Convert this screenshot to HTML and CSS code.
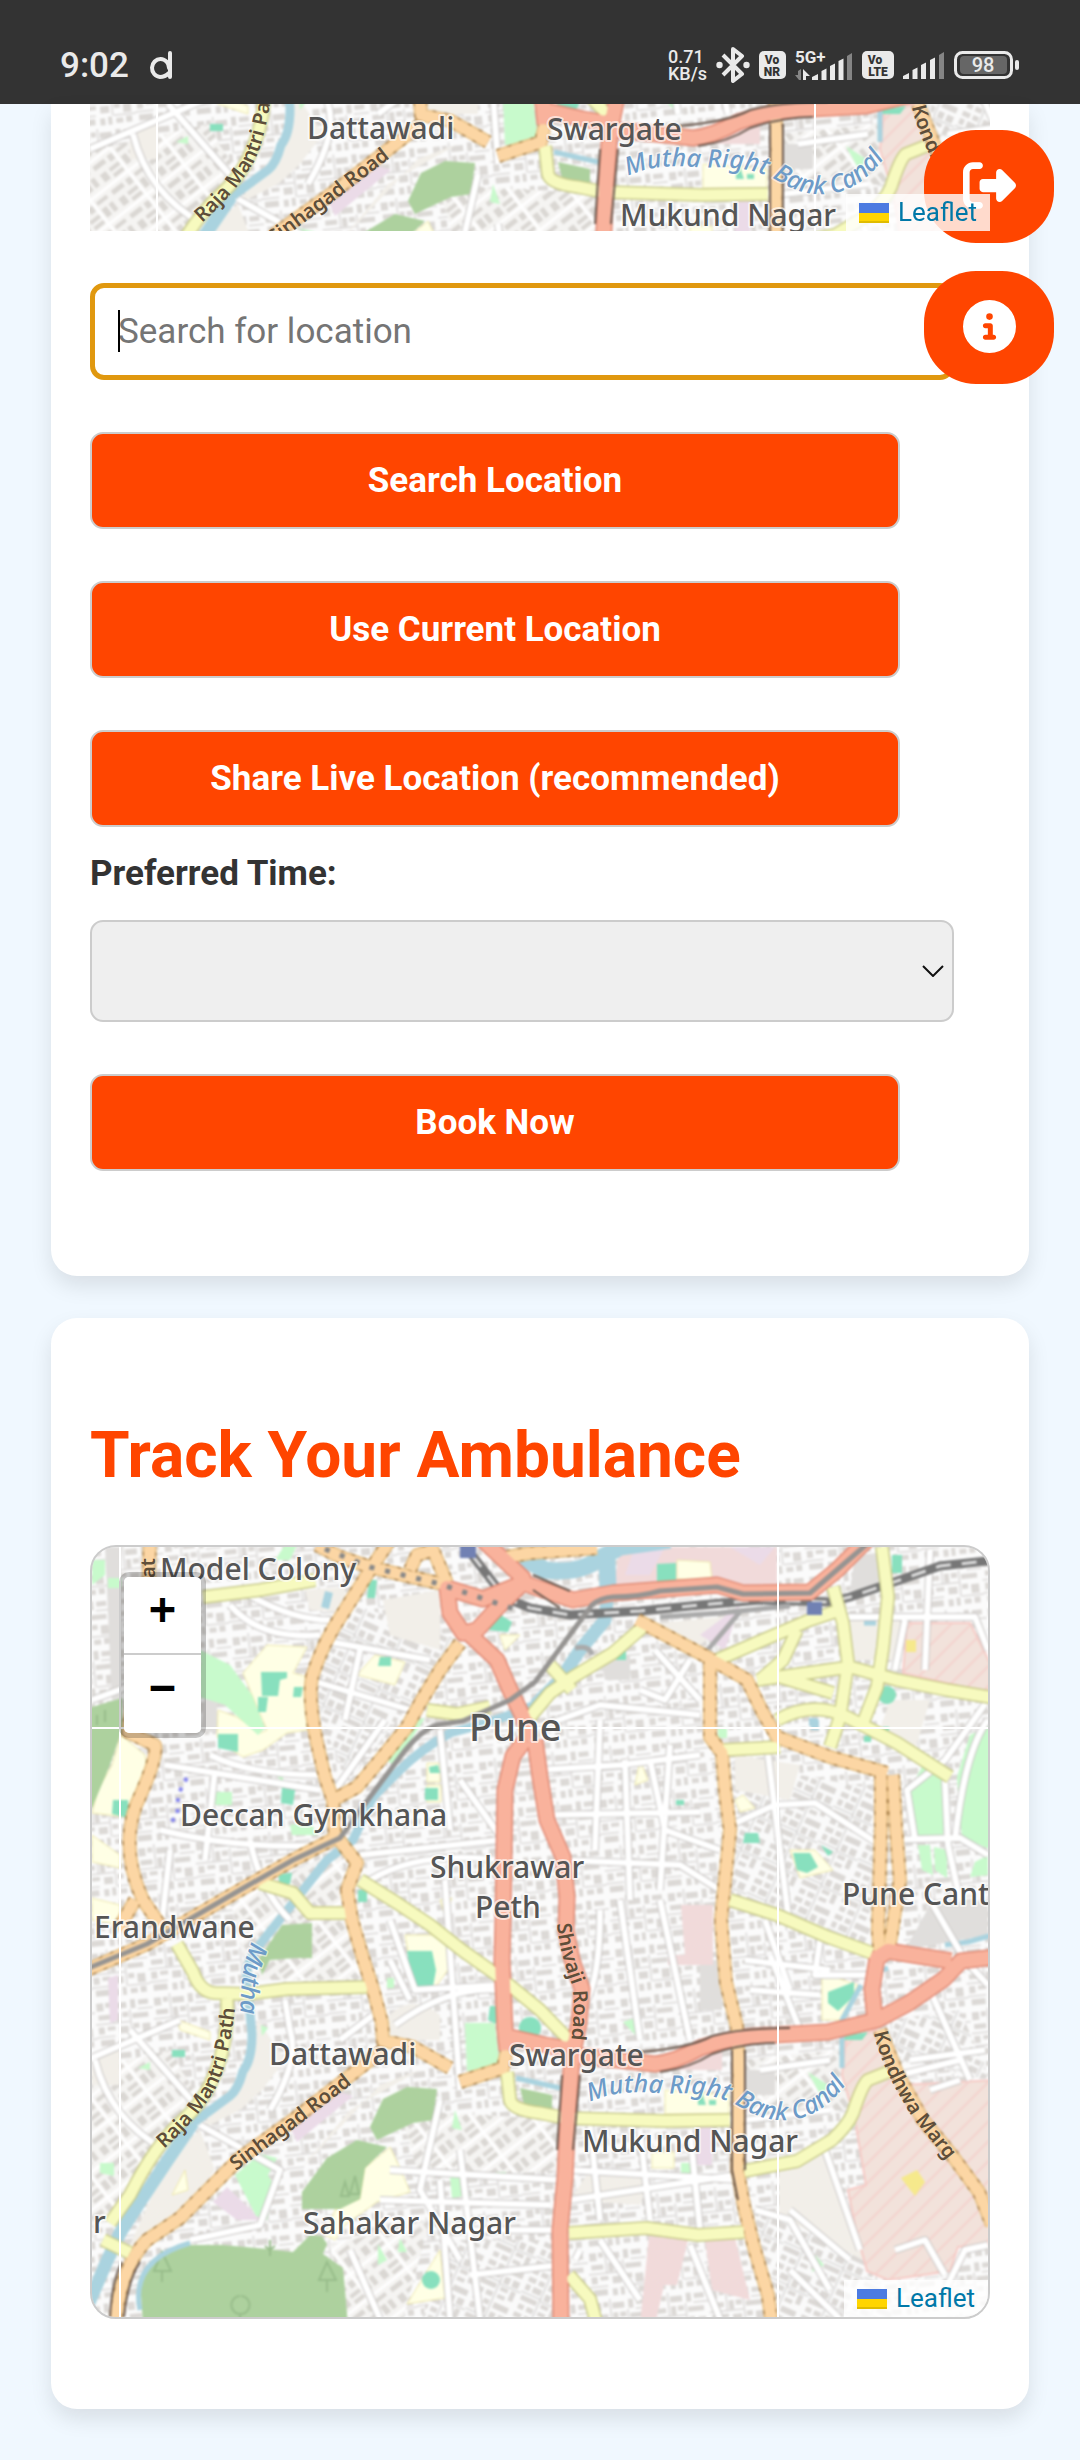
FILE: index.html
```html
<!DOCTYPE html>
<html lang="en">
<head>
<meta charset="utf-8">
<meta name="viewport" content="width=device-width, initial-scale=1">
<title>Ambulance Booking</title>
<link rel="stylesheet" href="styles.css">
</head>
<body>
<svg class="map-defs" aria-hidden="true">
  <defs>
    <pattern id="blocks-a" width="58" height="50" patternUnits="userSpaceOnUse" patternTransform="rotate(-6)">
      <rect width="58" height="50" fill="#fbfbfb"/>
      <path fill="#dcd9d6" d="M2 3h7v8H2zM11 3h5v5h-5zM20 4h12v6H20zM36 2h5v9h-5zM44 3h10v5H44zM3 15h12v5H3zM20 14h5v9h-5zM27 14h6v5h-6zM37 16h16v5H37zM2 27h6v7H2zM11 27h8v4h-8zM23 28h9v7h-9zM37 26h6v5h-6zM46 27h8v9h-8zM3 40h14v6H3zM22 40h5v7h-5zM30 39h4v8h-4zM38 41h7v5h-7zM48 40h6v6h-6z"/>
      <path fill="none" stroke="#cbc8c6" stroke-width="1" d="M18 0v24M35 12v26M0 24h34M36 38h22M0 37h18M43 12h15"/>
    </pattern>
    <pattern id="blocks-b" width="44" height="38" patternUnits="userSpaceOnUse" patternTransform="rotate(24)">
      <rect width="44" height="38" fill="#fafafa"/>
      <path fill="#dbd8d5" d="M2 2h8v5H2zM13 2h6v5h-6zM24 2h16v6H24zM2 10h5v6H2zM10 10h9v6h-9zM24 12h6v7h-6zM33 12h7v7h-7zM2 22h17v5H2zM24 23h8v4h-8zM35 23h5v10h-5zM3 31h6v5H3zM12 31h7v5h-7zM24 31h8v4h-8z"/>
      <path fill="none" stroke="#cbc8c6" stroke-width="1" d="M21 0v38M0 19h22M22 21h22"/>
    </pattern>
    <pattern id="blocks-c" width="48" height="30" patternUnits="userSpaceOnUse" patternTransform="rotate(-38)">
      <rect width="48" height="30" fill="#f5f4f2"/>
      <path fill="#dad7d3" d="M2 3h14v5H2zM20 3h6v7h-6zM31 3h13v4H31zM3 14h7v9H3zM14 14h12v4H14zM31 12h6v10h-6zM40 12h5v10h-5zM14 21h12v4H14z"/>
      <path fill="none" stroke="#fff" stroke-width="3" d="M0 28h48M28 0v30"/>
    </pattern>
    <pattern id="hatch" width="14" height="14" patternUnits="userSpaceOnUse" patternTransform="rotate(45)">
      <rect width="14" height="14" fill="#f2e2db"/>
      <path stroke="#f3d2cd" stroke-width="2" d="M1 0v14"/>
    </pattern>
    <g id="streets">
      <path d="M52 2075L180 2020M92 1700L200 1660M95 2060Q110 2120 165 2150M130 2030L200 2110M210 1755Q250 1775 320 1775M165 1765L320 1790M160 1830Q240 1850 330 1845M170 1850L160 1940M215 1770L205 1860M250 1840Q260 1890 290 1920M230 1605Q260 1640 320 1635M240 1590Q290 1620 330 1620M320 1640L430 1660M310 1680L410 1710M360 1650L345 1720M385 1720L335 1790M440 1730L450 1830M460 1780L510 1850M360 1855L500 1840M370 1880Q420 1850 500 1860M390 1920L415 1990L500 1985M395 2025Q450 1985 500 1990M445 1880L460 2090M390 1960L410 2000M285 2000L290 2030Q300 2060 270 2110M340 2040L380 2010M200 2125L280 2170L260 2225L190 2240M440 2100L420 2190L460 2260M390 2170L560 2180M440 2180L450 2319M350 2250L380 2319M460 2150L480 2319M455 2230H560M470 2275L560 2265M380 2200L550 2205"/>
      <path d="M545 1725L600 1705L700 1715M540 1770L620 1765L700 1755M600 1720L595 1850M545 1815L700 1812M625 1760L630 1900M650 1760L665 1830L720 1850M670 1745L660 1890M560 1860L680 1865L720 1890M690 1660L665 1700L640 1690M655 1650L700 1700M720 1830L775 1805L815 1803L880 1845M765 1730L790 1930M765 1920L790 1990M620 1900L640 2040M600 1910Q600 1990 580 2010M660 1900L690 2040M745 1960L830 1970M750 1990L820 1995M770 1955L800 2030M820 1940L815 1975L870 1975M570 2200L735 2175M590 2125L600 2220M640 2130L650 2220M690 2130L700 2230M570 2170L740 2180M690 2245L720 2319M580 2250L575 2260M600 2240L640 2300M760 2070L830 2060M745 2120L830 2110M825 2150L860 2250M790 2210L850 2260M790 2270L840 2319M755 2210L790 2220L830 2290"/>
      <path d="M845 1617H975L988 1650M905 1620L895 1670M930 1550L925 1670M880 1840L960 1838L988 1855M945 1780L948 1845L960 1900M988 1700L945 1760L907 1790L915 1840M988 1720Q965 1750 955 1840M930 1900L965 1960L988 1985M890 2005L930 1990L970 2080M910 2060L985 2050M900 2075L960 2060M930 2090L960 2080M895 2250L925 2240L945 2275M945 2290L965 2250L988 2245"/>
    </g>
    <g id="yellow-roads">
      <path d="M203 1597L260 1590L315 1580M427 1710L457 1714L490 1707M530 1717L550 1693L573 1677L613 1653L643 1627M717 1660L763 1640L810 1620L840 1610M833 1587L843 1623L848 1663L840 1717L830 1747M882 1547L888 1597L883 1647L877 1687L863 1723M757 1680L807 1673L850 1667L897 1680L947 1690L995 1698M777 1720Q813 1700 847 1717L897 1743L950 1777M760 1680L783 1660L797 1630M780 1677L833 1693M723 1750L780 1747M730 1900L777 1915L828 1937L872 1953M550 1665L572 1690"/>
      <path d="M260 1883L293 1893L310 1913L347 1913M360 1880L397 1903L430 1925L463 1951L497 1975L540 2010L569 2040M177 1944L193 1972Q200 1992 215 1993L247 1994L287 1989L367 1987M227 1999Q229 2047 210 2085Q200 2105 183 2120Q155 2145 130 2195L110 2223M103 2240L130 2253M507 2072L510 2100Q512 2110 540 2113L565 2118L665 2121L730 2120M744 2171L797 2161L832 2140Q848 2125 853 2113Q862 2085 868 2080L888 2072M569 2233L646 2228L698 2235L744 2232M569 2275L590 2299L597 2325"/>
    </g>
    <g id="orange-roads">
      <path d="M150 1540L148 1600L128 1732L155 1745Q158 1758 136 1805Q120 1850 143 1900L160 1925M135 1900L118 1930M390 1540L370 1570L343 1613Q323 1642 312 1677Q308 1700 317 1743L325 1777L333 1800L335 1837M460 1643L440 1670L420 1703L407 1727L380 1760L357 1787L333 1800M337 1837L293 1860L240 1890L147 1944L52 1985M337 1837L357 1863L347 1890L352 1920L363 1958L373 1989L382 2023L383 2041L413 2047L450 2068M317 1545L340 1557L370 1567L403 1575L447 1585M410 1570L417 1555L433 1550L447 1583M507 1557L530 1553L597 1548M460 2082L503 2068L507 2050"/>
      <path d="M637 1620L707 1657L747 1680L763 1713L777 1737L830 1757L887 1773M710 1660L710 1737L722 1753L725 1790L730 1830L721 1920L726 1982L737 2027L739 2075L737 2168L744 2206L754 2247L768 2295L772 2325M881 1775L881 1830L878 1930L880 1955M893 1775L896 1830L900 1880L889 1950M880 2030L898 2075L923 2120L951 2154L979 2192L992 2225M383 2050L347 2078L293 2120L240 2158L213 2185L180 2218L147 2240Q120 2268 115 2325"/>
    </g>
    <g id="red-roads">
      <path d="M483 1540L523 1578L523 1583L483 1599L447 1588L450 1613L463 1633L477 1630L500 1605L523 1583L573 1600L613 1593L653 1590L717 1585L743 1593L810 1592L837 1570L867 1540M468 1633L497 1660L510 1690L523 1717L530 1740M525 1740L513 1756L505 1790L503 1920L502 1960L505 2030L507 2050M535 1740L540 1777L547 1820L563 1857L567 1897L566 1930L572 1960L582 1989L579 2023L572 2058L568 2110L565 2178L560 2230L561 2325M510 2037L545 2045L572 2050M572 2055L655 2064Q675 2062 700 2048Q735 2035 775 2035L828 2032L877 2020L909 2003L944 1979L961 1961L995 1957M875 2020L872 1989L877 1958L888 1951L951 1961"/>
    </g>
    <g id="terrain">
      <rect x="40" y="1530" width="970" height="810" fill="url(#blocks-a)"/>
      <path fill="url(#blocks-b)" d="M340 1600L460 1640L350 1780L310 1700ZM720 1760L880 1790L875 1950L725 1900ZM740 2200L860 2240L900 2330H770ZM960 2010L990 2080L900 2060L890 2020ZM440 2240H560V2330H420Z"/>
      <path fill="url(#blocks-c)" d="M40 2080L170 2050L200 2100L110 2220L40 2240ZM230 1900L340 1850L360 1980L250 1980ZM740 2060L840 2050L850 2110L740 2115ZM400 2110L560 2120V2170L420 2180ZM330 2245L430 2220L400 2330H350Z"/>
      <!-- open ground -->
      <path fill="#f2efe9" d="M779 2165L830 2150L866 2262L779 2215ZM590 2170L650 2175L640 2205L570 2200ZM735 1755L800 1765L790 1800L735 1790ZM640 1625L740 1615L700 1645ZM383 1600L440 1590L440 1650L390 1635ZM305 1590L345 1587V1612L310 1610ZM840 1620H900V1660H850ZM890 1700L930 1700L915 1750L880 1730ZM92 2055L120 2050V2085H92ZM258 2020L285 2060L262 2090L240 2110L200 2130L250 2060ZM385 2020Q410 1990 440 2015V2040H390ZM350 2110L420 2070L380 2085L300 2170ZM170 2155L200 2130L215 2170L160 2240L130 2245Z"/>
      <path fill="#e0dedc" d="M855 1555H880V1590H850ZM930 1905L988 1900V1935L905 1950ZM700 1960H722V2010H700ZM742 2070H775V2095H745ZM205 1697H217V1732H200ZM600 1655H630V1680H605ZM105 1547H121V1700H112Z"/>
      <path fill="#f1dada" d="M613 1590L620 1547H777V1590ZM681 1905H713V1965L668 1965V1955H685ZM649 2236L688 2240L677 2285L664 2285L655 2325H640ZM705 2240L735 2238L750 2300L712 2290ZM680 2045H722V2070H675Z"/>
      <path fill="#ebdbe8" d="M635 1547H665L650 1575H625ZM730 1547H775L760 1565ZM290 2127L340 2092L353 2096L297 2142ZM213 2202L227 2187L262 2220H237ZM108 1978L118 1975V2020L110 2023ZM700 1635L740 1605L725 1650ZM697 2125H712V2165H697Z"/>
      <path fill="url(#hatch)" stroke="#f6cbc6" stroke-width="2" d="M842 2075L846 2040L876 2030L902 2085L995 2080V2244L958 2247L950 2271L888 2280L867 2271L856 2230L848 2190L866 2185L855 2120ZM907 1623H970L990 1663V1693L903 1673Z"/>
      <!-- schools and campuses -->
      <path fill="#ffffe5" stroke="#efe9b0" stroke-width="1" d="M121 1735L145 1755L148 1775L125 1817L92 1813L98 1790L112 1765ZM243 1673L267 1645L307 1647L293 1673L308 1677L307 1730L287 1733L263 1750L243 1757L227 1747L217 1737L218 1710L237 1717L260 1733L267 1730L253 1697ZM357 1675L375 1655L405 1662L395 1685ZM677 1560L710 1562L712 1580L677 1579ZM365 2168L390 2147L400 2168L410 2192L377 2202L345 2225L335 2240L325 2235L335 2210L360 2199ZM407 2304L440 2250L445 2298ZM405 1935H450V1967L432 1992L413 1980ZM665 2090L729 2095V2114H665ZM822 1973L858 1985L840 2020L822 2020ZM652 2152H674V2168H652ZM735 1800L743 1795L755 1808L740 1812ZM790 1850L815 1850L833 1870L800 1878ZM178 2020L210 2032V2040L180 2030ZM185 2170L188 2190L172 2195ZM500 1635H520L505 1650ZM427 1763H440V1782H427ZM427 1785H441V1802H427ZM92 1898L120 1905V1925L92 1920ZM980 1765L988 1770V1795L975 1785ZM92 1835L120 1855V1868L92 1862ZM810 1610H825V1618H810ZM440 1900L452 1898L445 1915ZM640 1760L648 1780L635 1785Z"/>
      <path fill="#f6e98c" d="M901 2178L917 2170L925 2182L915 2196ZM906 1640H916V1652H906Z"/>
      <!-- parks -->
      <path fill="#c8facc" d="M200 1650L230 1665L252 1695L265 1728L258 1735L225 1705L200 1697ZM275 1560L285 1545H297L290 1560ZM108 1578H121V1588H108ZM215 1792H232V1805H215ZM290 1825L310 1822L318 1835H292ZM235 2175L260 2154L277 2158L268 2175L275 2187L267 2220L256 2216ZM465 2023L495 2023L500 2068L467 2071ZM910 1790L927 1757L947 1777L943 1837L917 1837ZM992 1725L970 1735L957 1777L962 1838L992 1850ZM918 1845H930L933 1875L922 1870ZM934 1847L947 1850L947 1878L935 1870ZM975 1862L988 1855V1875L970 1877ZM623 2022L635 2018L640 2040ZM808 2072L828 2085L822 2098ZM815 2255L824 2265L812 2272ZM450 2176L460 2178L470 2195L452 2198ZM681 2163H692V2180H681ZM415 1720L425 1718L395 1765L388 1762ZM378 2244L387 2260L378 2265ZM455 2110L462 2130L452 2128ZM100 2163H114V2176L100 2173ZM138 2068L150 2062V2070ZM400 2238L407 2252H398ZM440 2190L450 2195ZM92 1560H105V1575L92 1585ZM270 1770L283 1773V1782ZM850 2115L856 2125L848 2130ZM261 2025L268 2028L262 2036ZM387 1978H394V1988H387ZM495 2172H506V2180H495ZM718 1728H727V1738H718Z"/>
      <path fill="#add19e" d="M40 1720L92 1707L122 1698V1730L110 1765L92 1808H40ZM370 2127L383 2099L407 2087L437 2089L433 2120L413 2123L377 2140ZM302 2192L327 2158L357 2140L387 2147L365 2168L360 2199L340 2209L302 2209ZM143 2325L140 2280L157 2257L190 2245L223 2245L267 2249L293 2252L310 2235L322 2236L327 2244L323 2254L343 2268L348 2325ZM520 2088L552 2095V2112L524 2104ZM282 1925L312 1923V1958L295 1958L270 1960L262 1975L258 1960Z"/>
      <path fill="#88e0be" d="M261 1672H287V1678L280 1680L278 1696H262ZM258 1697H268L266 1712H258ZM294 1687H303L301 1697H293ZM218 1734H238V1752L218 1748ZM369 1580H377L375 1598H367ZM484 1620L496 1612L512 1622L508 1632L488 1630ZM380 1657H391V1666H378ZM657 1564L676 1563V1582H657ZM282 1787L295 1790L293 1805L281 1803ZM113 1800H128V1818L112 1814ZM425 1788H438V1800H425ZM429 1767L438 1765L440 1773H430ZM278 1874L292 1873L290 1884L280 1885ZM358 1890H367V1902H358ZM407 1951L432 1951L436 1970L432 1992L413 1992ZM828 1992L854 1982L854 1996L838 2011L828 2003ZM793 1853L810 1853L818 1867L807 1873L797 1870ZM745 1833H758L760 1843H743ZM892 1555H902V1573H892ZM490 2006H496V2024L488 2020ZM821 1845L833 1852L828 1856ZM172 2050H185V2057H172ZM840 2036L868 2032L862 2040L842 2040ZM702 2093L706 2105H698V2098ZM709 2100H716V2105H709ZM864 1736H871V1742H864ZM883 1727H889V1732H883ZM676 1800H684V1805H676ZM614 1650H626V1660H616Z"/>
      <circle cx="530" cy="2028" r="11" fill="#88e0be"/>
      <circle cx="431" cy="2280" r="9" fill="#88e0be"/>
      <circle cx="887" cy="1695" r="9" fill="#88e0be"/>
      <path fill="none" stroke="#98bd8b" stroke-width="2" d="M162 2252L154 2271H171ZM162 2271V2282M327 2262L319 2280H336ZM327 2280V2292M240 2296a9 9 0 1 0 1 0M240 2314V2322M345 2182L341 2196H349ZM355 2176L350 2194H359ZM97 1715V1725M105 1710V1722M270 2240V2256M265 2246L270 2250L275 2246"/>
      <!-- water -->
      <g class="water">
        <path stroke-width="17" d="M520 1556L545 1570Q580 1574 597 1560L620 1547L670 1540M607 1560L608 1590"/>
        <path stroke-width="13" d="M608 1590L605 1620L580 1650L560 1680L535 1705"/>
        <path stroke-width="9" d="M535 1705Q500 1720 450 1733Q420 1750 400 1770L373 1797L353 1840L327 1860L293 1903L257 1948Q245 1965 247 1982L252 2034Q252 2060 243 2071Q238 2090 230 2096L193 2123"/>
        <path stroke-width="13" d="M193 2123L167 2161L140 2202L120 2233L107 2261L88 2305"/>
        <path stroke-width="5" d="M140 2310Q130 2260 190 2243M842 2068L842 2020L861 1985M868 1975L888 1968M945 1945L968 1942L992 1935M516 2078L560 2088M864 1623H876"/>
        <path stroke-width="8" d="M329 1592L325 1608M809 1722H815V1730"/>
      </g>
      <use href="#streets" class="street-casing"/>
      <use href="#streets" class="street-fill"/>
      <g class="rail">
        <path stroke="#777" stroke-width="9" d="M472 1555L505 1598L530 1608L570 1615L640 1611L700 1605L760 1600L830 1602L850 1597L900 1580L940 1566L995 1560"/>
        <path stroke="#ddd" stroke-width="3" stroke-dasharray="15 11" d="M472 1555L505 1598L530 1608L570 1615L640 1611L700 1605L760 1600L830 1602L850 1597L900 1580L940 1566L995 1560"/>
        <path stroke="#aaa" stroke-width="5" d="M660 1617L720 1613L790 1606M740 1612L705 1653M575 1648Q590 1645 592 1655"/>
      </g>
      <use href="#yellow-roads" class="yellow-casing"/>
      <use href="#orange-roads" class="orange-casing"/>
      <use href="#orange-roads" class="orange-dots"/>
      <use href="#red-roads" class="red-casing"/>
      <use href="#yellow-roads" class="yellow-fill"/>
      <use href="#orange-roads" class="orange-fill"/>
      <use href="#red-roads" class="red-fill"/>
      <path fill="none" stroke="#6b5a50" stroke-width="2" d="M640 2052Q690 2048 712 2036Q740 2028 790 2028M660 2072Q690 2068 712 2054Q740 2044 775 2043M562 2075L557 2150M580 2075L573 2150M732 2050V2170L738 2200M745 2050V2170M533 1575L570 1591M533 1590L560 1608M122 2262Q112 2280 110 2317M140 2262Q128 2280 124 2317"/>
      <path fill="none" stroke="#888" stroke-width="5" stroke-dasharray="5 11" d="M325 1549L370 1567L403 1575L440 1584L490 1601L523 1612"/>
      <path fill="none" stroke="#969492" stroke-width="5" stroke-linejoin="round" d="M40 1988L147 1944L240 1890L293 1860L340 1838L370 1797L400 1757Q420 1730 437 1725L463 1721L510 1700L535 1682L592 1605Q600 1598 613 1597Q640 1597 660 1591L717 1587L743 1594L810 1593L867 1544"/>
      <path fill="#7181b3" d="M460 1545H476V1558H460ZM807 1602H822V1615H807Z"/>
      <path fill="none" stroke="#8888ee" stroke-width="4" stroke-dasharray="4 7" d="M187 1778Q175 1795 178 1815L168 1825"/>
    </g>
  </defs>
</svg>

<header class="status-bar">
  <div class="status-group">
    <span class="clock">9:02</span>
    <svg width="24" height="30" viewBox="0 0 24 30" aria-hidden="true"><path fill="none" stroke="#eaeaea" stroke-width="4" stroke-linecap="round" d="M21 3V27M20 18a8.500 9 0 1 0-9 9q5 0 9-4"/></svg>
  </div>
  <div class="status-group status-icons">
    <span class="net-speed"><span>0.71</span><span>KB/s</span></span>
    <svg width="34" height="36" viewBox="0 0 34 36" aria-hidden="true"><path fill="none" stroke="#eaeaea" stroke-width="4" stroke-linejoin="round" d="M7 8L26 27L17 34V2L26 9L7 28"/><circle cx="3.500" cy="18" r="3.200" fill="#eaeaea"/><circle cx="30.500" cy="18" r="3.200" fill="#eaeaea"/></svg>
    <svg class="badge" width="27" height="28" viewBox="0 0 27 28"><rect width="27" height="28" rx="5"/><text x="13" y="13">Vo</text><text x="13" y="25">NR</text></svg>
    <svg width="58" height="30" viewBox="0 0 58 30"><text class="net-type" x="0" y="13">5G+</text><path fill="#eaeaea" d="M17 30v-3l6-3v6zM26.500 30v-9l5-2.500V30zM35 30V16l5-2.500V30zM43.500 30V11l5-2.500V30zM8 19v11h3v-4h4z"/><path fill="#858585" d="M52 30V6l5-3v27zM6 19v11H4l-4-5h3v-4z"/></svg>
    <svg class="badge" width="32" height="28" viewBox="0 0 32 28"><rect width="32" height="28" rx="5"/><text x="13" y="13">Vo</text><text x="16" y="25">LTE</text></svg>
    <svg width="42" height="27" viewBox="0 0 42 27" aria-hidden="true"><path fill="#eaeaea" d="M0 27v-3l6-3v6zM9.500 27v-9l5-2.500V27zM18 27V13l5-2.500V27zM27 27V8l5-2.500V27z"/><path fill="#858585" d="M36 27V3l5-3v27z"/></svg>
    <svg width="66" height="30" viewBox="0 0 66 30"><rect x="1.500" y="2.500" width="56" height="25" rx="7" fill="none" stroke="#eaeaea" stroke-width="3"/><rect x="6" y="6" width="47" height="18" rx="4" fill="#666"/><rect x="61" y="10" width="4" height="10" rx="2" fill="#eaeaea"/><text class="battery-level" x="29" y="22">98</text></svg>
  </div>
</header>

<button class="float-button logout" type="button" aria-label="Log out">
  <svg viewBox="0 0 512 512" aria-hidden="true"><path d="M377.900 105.900L500.700 228.700c7.200 7.200 11.300 17.100 11.300 27.300s-4.100 20.100-11.300 27.300L377.900 406.100c-6.400 6.400-15 9.900-24 9.900c-18.700 0-33.900-15.200-33.900-33.900l0-62.100-128 0c-17.700 0-32-14.300-32-32l0-64c0-17.700 14.300-32 32-32l128 0 0-62.100c0-18.700 15.200-33.900 33.900-33.900c9 0 17.600 3.600 24 9.900zM160 96L96 96c-17.700 0-32 14.300-32 32l0 256c0 17.700 14.300 32 32 32l64 0c17.700 0 32 14.300 32 32s-14.300 32-32 32l-64 0c-53 0-96-43-96-96L0 128C0 75 43 32 96 32l64 0c17.700 0 32 14.300 32 32s-14.300 32-32 32z"/></svg>
</button>
<button class="float-button info" type="button" aria-label="Information">
  <svg viewBox="0 0 512 512" aria-hidden="true"><path d="M256 512A256 256 0 1 0 256 0a256 256 0 1 0 0 512zM216 336l24 0 0-64-24 0c-13.300 0-24-10.700-24-24s10.700-24 24-24l48 0c13.300 0 24 10.700 24 24l0 88 8 0c13.300 0 24 10.700 24 24s-10.700 24-24 24l-80 0c-13.300 0-24-10.700-24-24s10.700-24 24-24zm40-208a32 32 0 1 1 0 64 32 32 0 1 1 0-64z"/></svg>
</button>

<main>
  <section class="card booking">
    <div class="map pickup-map">
      <svg class="map-canvas" viewBox="52 2030 900 127" preserveAspectRatio="xMidYMax slice">
        <use href="#terrain" class="terrain"/>
        <g class="seams"><path d="M119 2000V2200M777 2000V2200"/></g>
        <path id="p-raja" fill="none" d="M164 2149Q195 2122 216 2088Q232 2055 237 1985"/>
        <path id="p-sinh" fill="none" d="M236 2171L300 2124L365 2074"/>
        <path id="p-canal" fill="none" d="M590 2102Q620 2088 665 2094Q715 2090 745 2110Q775 2126 804 2117Q836 2106 862 2060"/>
        <path id="p-kond" fill="none" d="M874 2033Q882 2070 913 2118L955 2170"/>
        <g class="places"><text x="269" y="2065">Dattawadi</text><text x="509" y="2066">Swargate</text><text x="582" y="2152">Mukund Nagar</text></g>
        <g class="roads"><text><textPath href="#p-raja">Raja Mantri Path</textPath></text><text><textPath href="#p-sinh">Sinhagad Road</textPath></text><text><textPath href="#p-kond">Kondhwa Marg</textPath></text></g>
        <text class="rivers"><textPath href="#p-canal">Mutha Right Bank Canal</textPath></text>
      </svg>
      <div class="attribution"><a href="#leaflet"><svg width="30" height="20" viewBox="0 0 30 20" aria-hidden="true"><path fill="#4c7be1" d="M0 0h30v10H0z"/><path fill="#ffd500" d="M0 10h30v9H0z"/><path fill="#e0bc00" d="M0 18h30v2H0z"/></svg>Leaflet</a></div>
    </div>
    <form class="booking-form">
      <div class="search-field">
        <input id="search" type="text" placeholder="Search for location" aria-label="Search for location">
        <span class="caret"></span>
      </div>
      <button class="action" type="button">Search Location</button>
      <button class="action" type="button">Use Current Location</button>
      <button class="action" type="button">Share Live Location (recommended)</button>
      <div class="time-field">
        <label for="time">Preferred Time:</label>
        <div class="select-wrap">
          <select id="time"><option></option></select>
          <svg width="22" height="12" viewBox="0 0 22 12" aria-hidden="true"><path fill="none" stroke="#111" stroke-width="2" d="M1 1L11 11L21 1"/></svg>
        </div>
      </div>
      <button class="action" type="submit">Book Now</button>
    </form>
  </section>

  <section class="card tracking">
    <h2>Track Your Ambulance</h2>
    <div class="map tracking-map">
      <svg class="map-canvas" viewBox="92 1547 896 770" preserveAspectRatio="xMidYMid slice">
        <use href="#terrain" class="terrain"/>
        <g class="seams"><path d="M120 1540V2330M778 1540V2330M80 1728H1000"/></g>
        <path id="raja" fill="none" d="M164 2149Q195 2122 216 2088Q232 2055 237 1985"/>
        <path id="sinh" fill="none" d="M236 2171L300 2124L365 2074"/>
        <path id="shiv" fill="none" d="M557 1924Q559 1950 572 1985Q576 2010 570 2050"/>
        <path id="kond" fill="none" d="M874 2033Q882 2070 913 2118L955 2170"/>
        <path id="mutha" fill="none" d="M252 1942Q238 1970 241 2030"/>
        <path id="canal" fill="none" d="M590 2102Q620 2088 665 2094Q715 2090 745 2110Q775 2126 804 2117Q836 2106 862 2060"/>
        <g class="roads">
          <text transform="translate(155 1578) rotate(-90)">at</text>
          <text><textPath href="#raja">Raja Mantri Path</textPath></text>
          <text><textPath href="#sinh">Sinhagad Road</textPath></text>
          <text><textPath href="#shiv">Shivaji Road</textPath></text>
          <text><textPath href="#kond">Kondhwa Marg</textPath></text>
        </g>
        <g class="rivers">
          <text><textPath href="#mutha">Mutha</textPath></text>
          <text><textPath href="#canal">Mutha Right Bank Canal</textPath></text>
        </g>
        <g class="places">
          <text x="160" y="1580">Model Colony</text>
          <text x="180" y="1826">Deccan Gymkhana</text>
          <text class="city" x="469" y="1741">Pune</text>
          <text x="430" y="1878">Shukrawar</text>
          <text x="475" y="1918">Peth</text>
          <text x="94" y="1938">Erandwane</text>
          <text x="842" y="1905">Pune Cant</text>
          <text x="269" y="2065">Dattawadi</text>
          <text x="509" y="2066">Swargate</text>
          <text x="582" y="2152">Mukund Nagar</text>
          <text x="303" y="2234">Sahakar Nagar</text>
          <text x="93" y="2233">r</text>
        </g>
      </svg>
      <div class="zoom-control">
        <button type="button" aria-label="Zoom in">+</button>
        <button type="button" aria-label="Zoom out">−</button>
      </div>
      <div class="attribution"><a href="#leaflet"><svg width="30" height="20" viewBox="0 0 30 20" aria-hidden="true"><path fill="#4c7be1" d="M0 0h30v10H0z"/><path fill="#ffd500" d="M0 10h30v9H0z"/><path fill="#e0bc00" d="M0 18h30v2H0z"/></svg>Leaflet</a></div>
    </div>
  </section>
</main>
</body>
</html>
```
FILE: styles.css
```css
* {
  box-sizing: border-box;
}

body {
  margin: 0;
  background: #f0f8ff;
  color: #333;
  font-family: Roboto, "Liberation Sans", sans-serif;
  font-size: 35px;
}

button,
input,
select {
  font: inherit;
}

.map-defs {
  position: absolute;
  width: 0;
  height: 0;
}

/* Status bar */
.status-bar {
  display: flex;
  justify-content: space-between;
  align-items: center;
  height: 104px;
  padding: 26px 60px 0;
  background: #333;
  color: #eaeaea;
}

.status-group {
  display: flex;
  align-items: center;
  gap: 20px;
}

.status-icons {
  gap: 9px;
}

.clock {
  font-size: 35px;
  font-weight: 500;
}

.net-speed {
  display: flex;
  flex-direction: column;
  font-size: 18px;
  line-height: 17px;
  font-weight: 500;
}

.status-bar text {
  font-family: Roboto, sans-serif;
}

.badge rect {
  fill: #eaeaea;
}

.badge text {
  fill: #333;
  font-size: 12px;
  font-weight: 900;
  text-anchor: middle;
}

.net-type {
  fill: #eaeaea;
  font-size: 17px;
  font-weight: 700;
}

.battery-level {
  fill: #eaeaea;
  font-size: 20px;
  font-weight: 500;
  text-anchor: middle;
}

/* Floating buttons */
.float-button {
  position: fixed;
  right: 26px;
  z-index: 5;
  display: flex;
  justify-content: center;
  align-items: center;
  width: 130px;
  height: 113px;
  padding: 0 0 3px;
  border: 0;
  border-radius: 52px;
  background: #ff4500;
}

.float-button svg {
  width: 53px;
  height: 53px;
  fill: #fff;
}

.logout {
  top: 130px;
}

.info {
  top: 271px;
}

/* Cards */
main {
  display: flex;
  flex-direction: column;
  gap: 42px;
  padding: 0 51px 51px;
}

.card {
  padding: 0 39px;
  border-radius: 26px;
  background: #fff;
  box-shadow: 0 10px 21px rgba(0, 0, 0, 0.1);
}

.booking {
  padding-bottom: 105px;
  border-radius: 0 0 26px 26px;
}

.tracking {
  padding-top: 101px;
  padding-bottom: 90px;
}

h2 {
  margin: 0 0 52px;
  color: #ff4500;
  font-size: 64px;
  line-height: 74px;
  font-weight: 700;
}

/* Booking form */
.booking-form {
  display: flex;
  flex-direction: column;
  gap: 52px;
  margin-top: 52px;
}

.search-field,
.time-field {
  width: 96%;
}

.search-field {
  position: relative;
}

.search-field input {
  display: block;
  width: 100%;
  height: 97px;
  padding: 0 23px;
  border: 5px solid #e0980f;
  border-radius: 14px;
  background: #fff;
  outline: 0;
}

.search-field input::placeholder {
  color: #757575;
  opacity: 1;
}

.caret {
  position: absolute;
  top: 27px;
  left: 28px;
  width: 2px;
  height: 42px;
  background: #000;
}

.action {
  width: 90%;
  height: 97px;
  border: 2px solid #ccc;
  border-radius: 13px;
  background: #ff4500;
  color: #fff;
  font-weight: 700;
}

.time-field {
  margin-top: -26px;
}

.time-field label {
  display: block;
  margin-bottom: 25px;
  line-height: 42px;
  font-weight: 700;
}

.select-wrap {
  position: relative;
}

.select-wrap select {
  display: block;
  width: 100%;
  height: 102px;
  padding: 0 26px;
  border: 2px solid #ccc;
  border-radius: 13px;
  background: #efefef;
  appearance: none;
}

.select-wrap svg {
  position: absolute;
  top: 45px;
  right: 10px;
  pointer-events: none;
}

/* Maps */
.map {
  position: relative;
  overflow: hidden;
  background: #ddd;
}

.pickup-map {
  height: 127px;
  overflow: visible;
}

.tracking-map {
  height: 774px;
  border: 2px solid #ccc;
  border-radius: 26px;
}

.map-canvas {
  display: block;
  width: 100%;
  height: 100%;
}

.zoom-control {
  position: absolute;
  top: 25px;
  left: 27px;
  width: 87px;
  border: 5px solid rgba(0, 0, 0, 0.2);
  border-radius: 10px;
  background-clip: padding-box;
}

.zoom-control button {
  display: block;
  width: 100%;
  height: 78px;
  padding: 0 0 14px;
  border: 0;
  background: #fff;
  color: #000;
  font-family: "DejaVu Sans Mono", monospace;
  font-size: 44px;
  line-height: 64px;
  font-weight: 700;
}

.zoom-control button:first-child {
  border-bottom: 2px solid #ccc;
  border-radius: 5px 5px 0 0;
}

.zoom-control button:last-child {
  border-radius: 0 0 5px 5px;
}

.attribution {
  position: absolute;
  right: 0;
  bottom: 0;
  z-index: 10;
  padding: 0 13px;
  background: rgba(255, 255, 255, 0.8);
  font-size: 26px;
  line-height: 37px;
}

.attribution a {
  display: flex;
  align-items: center;
  gap: 9px;
  color: #0078a8;
  text-decoration: none;
}

/* Map drawing */
.terrain {
  filter: blur(1px);
}

.seams {
  fill: none;
  stroke: #fff;
  stroke-width: 2;
}

.water {
  fill: none;
  stroke: #aad3df;
  stroke-linejoin: round;
}

.rail {
  fill: none;
}

.street-casing,
.street-fill,
.yellow-casing,
.yellow-fill,
.orange-casing,
.orange-dots,
.orange-fill,
.red-casing,
.red-fill {
  fill: none;
  stroke-linejoin: round;
}

.street-casing {
  stroke: #c9c6c4;
  stroke-width: 8;
}

.street-fill {
  stroke: #fff;
  stroke-width: 6;
}

.yellow-casing {
  stroke: #c9cb8c;
  stroke-width: 14;
}

.yellow-fill {
  stroke: #f7fabf;
  stroke-width: 11;
}

.orange-casing {
  stroke: #e3bd82;
  stroke-width: 14;
}

.orange-dots {
  stroke: #ac854f;
  stroke-width: 14;
  stroke-dasharray: 4 8;
}

.orange-fill {
  stroke: #fcd6a4;
  stroke-width: 11;
}

.red-casing {
  stroke: #e08a75;
  stroke-width: 17;
}

.red-fill {
  stroke: #f9b29c;
  stroke-width: 14;
}

.places,
.roads,
.rivers {
  font-family: "Noto Sans", sans-serif;
  paint-order: stroke;
  stroke-linejoin: round;
}

.places {
  fill: #555;
  stroke: rgba(255, 255, 255, 0.6);
  stroke-width: 4;
  font-size: 30px;
  font-weight: 500;
}

.places .city {
  font-size: 38px;
}

.roads {
  fill: #5e4e3a;
  font-size: 20px;
  font-weight: 600;
}

.rivers {
  fill: #6d9bc8;
  stroke: rgba(255, 255, 255, 0.5);
  stroke-width: 3;
  font-size: 25px;
  font-style: italic;
  font-weight: 500;
}
```
